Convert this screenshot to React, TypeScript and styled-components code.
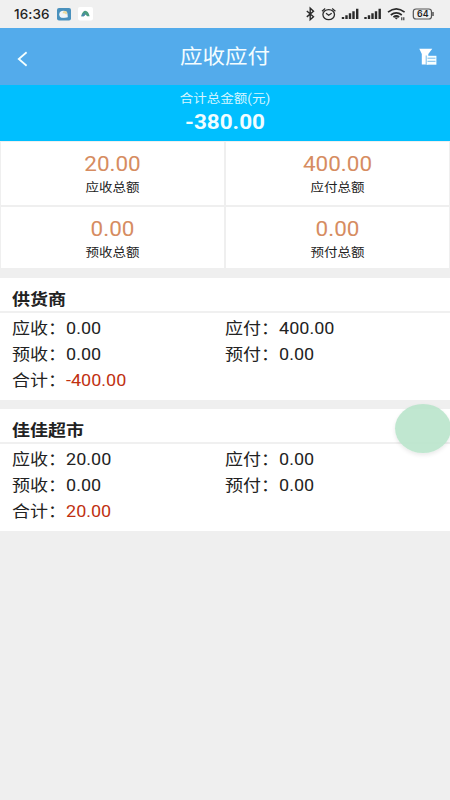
import React from 'react';
import styled, { createGlobalStyle } from 'styled-components';

const GlobalStyle = createGlobalStyle`
  * { box-sizing: border-box; }
  body {
    margin: 0;
    background: #efefef;
    font-family: Roboto, "Noto Sans CJK SC", sans-serif;
    color: #222;
  }
`;

const Screen = styled.div`
  position: relative;
  width: 450px;
  height: 800px;
  overflow: hidden;
  background: #efefef;
`;

const StatusBar = styled.div`
  display: flex;
  align-items: center;
  justify-content: space-between;
  height: 28px;
  padding: 0 15px 0 14px;
  background: #f0f0f0;
`;

const StatusGroup = styled.div`
  display: flex;
  align-items: center;
`;

const Clock = styled.span`
  width: 43px;
  font: 500 13.5px/28px Inter, sans-serif;
  letter-spacing: 0.1px;
  color: #222;
`;

const NavBar = styled.header`
  display: grid;
  grid-template-columns: 50px 1fr 50px;
  align-items: center;
  height: 57px;
  background: #53abeb;
`;

const NavButton = styled.button<{ $end?: boolean }>`
  display: flex;
  justify-content: ${(p) => (p.$end ? 'flex-end' : 'flex-start')};
  padding: ${(p) => (p.$end ? '0 13px 0 0' : '4px 0 0 17px')};
  border: 0;
  background: none;
`;

const Wide = styled.span<{ $size: number; $bold?: boolean; $color?: string; $start?: boolean }>`
  display: block;
  font-size: ${(p) => p.$size}px;
  font-weight: ${(p) => (p.$bold ? 700 : 400)};
  color: ${(p) => p.$color ?? 'inherit'};
  white-space: pre;
  transform: scaleX(1.125);
  transform-origin: ${(p) => (p.$start ? 'left' : 'center')};
`;

const Title = styled.h1`
  margin: 0;
  padding-top: 2px;
  line-height: 55px;
  text-align: center;
  font-weight: 400;
`;

const Banner = styled.section`
  height: 56px;
  padding-top: 4px;
  background: #00bfff;
  text-align: center;
  line-height: 21px;
`;

const BannerAmount = styled.div`
  line-height: 25px;
`;

const Summary = styled.section`
  display: grid;
  grid-template-columns: 223px 223px;
  grid-template-rows: 63px 61px;
  gap: 2px;
  padding: 1px 1px 0;
  height: 137px;
`;

const Cell = styled.div`
  padding-top: 10px;
  background: #fff;
  text-align: center;
  line-height: 25px;
`;

const CellLabel = styled.div`
  line-height: 23px;
`;

const Card = styled.section`
  height: 122px;
  margin-bottom: 9px;
  background: #fff;
`;

const CardName = styled.h2`
  height: 35px;
  margin: 0;
  padding: 4px 0 0 11.5px;
  border-bottom: 2px solid #f0f0f0;
  line-height: 35px;
`;

const Fields = styled.div`
  display: grid;
  grid-template-columns: 213.5px 213px;
  grid-auto-rows: 26px;
  padding: 3px 11.5px 0;
  line-height: 26px;
`;

const Red = styled.span`
  color: #c03010;
`;

const FloatingBall = styled.div`
  position: absolute;
  left: 395px;
  top: 404px;
  width: 56px;
  height: 49px;
  border-radius: 50%;
  background: rgba(183, 228, 201, 0.88);
  box-shadow: 0 2px 4px rgba(0, 0, 0, 0.09);
`;

const WeatherIcon = () => (
  <svg width="14" height="13" viewBox="0 0 14 13">
    <rect width="14" height="12.5" rx="2" fill="#4a91bd" />
    <ellipse cx="6.4" cy="6.3" rx="4.1" ry="3.5" fill="#f2f6f8" />
    <ellipse cx="7.9" cy="4.9" rx="2.3" ry="1.9" fill="#ead9a0" />
    <path d="M2.8 8.3a2 2 0 0 1 2.4-2.5 2.3 2.3 0 0 1 3.6.8 1.7 1.7 0 0 1 1.6 2.8H4.2a1.5 1.5 0 0 1-1.4-1.1Z" fill="#f2f6f8" />
  </svg>
);

const AppIcon = () => (
  <svg width="15" height="14" viewBox="0 0 15 14">
    <rect width="15" height="13.5" rx="2" fill="#fff" />
    <path d="M3.2 9.2C4 5.8 5.6 3.8 7.3 3.8c2 0 3.7 2.4 4.3 5.4H9.2L7.5 7.6 5.8 9.2Z" fill="#4c9d80" />
    <path d="M3.2 9.2l2.9-3.4 1.4 1.8-1.7 1.6Z" fill="#4c86b0" />
  </svg>
);

const IconGap = styled.span`
  width: 7px;
`;

const StatusIcons = () => (
  <svg width="131" height="28" viewBox="304 0 131 28" fill="none" stroke="#2b2b2b">
    <path d="M306.8 11l6.7 5.7-3.3 3V8.2l3.3 3-6.7 5.7" strokeWidth="1.4" />
    <ellipse cx="328.7" cy="14.6" rx="5.8" ry="5" strokeWidth="1.3" />
    <path d="M322 11.2l3.2-2.7M332.2 8.5l3.2 2.7M326 13.2l2.7 2 3-2" strokeWidth="1.2" />
    <g strokeWidth="2.4">
      <path d="M343 19v-2M346.5 19v-3.7M350 19v-5.8M353.5 19v-7.8M357.2 19V8.8" />
      <path d="M365.5 19v-2M369 19v-3.7M372.5 19v-5.8M376 19v-7.8M379.7 19V8.8" />
    </g>
    <path d="M388 12.2q8.3-6.6 16.6 0M390.8 15q5.5-4.3 11 0M393.4 17.2q3-2.4 5.8 0" strokeWidth="1.7" />
    <path d="M394.4 17.5h3.8l-1.9 2.1Z" fill="#2b2b2b" stroke="none" />
    <path d="M401.8 17.2v3M403.8 17.2v3" strokeWidth="1.1" />
    <rect x="413.3" y="9" width="18.2" height="10" rx="2.8" stroke="#555" strokeWidth="1.2" />
    <path d="M433 12v4" stroke="#555" strokeWidth="1.5" />
    <text x="422.8" y="17.2" textAnchor="middle" fontFamily="Inter" fontSize="8.8" fontWeight="600" fill="#222" stroke="none">64</text>
  </svg>
);

const BackIcon = () => (
  <svg width="12" height="18" viewBox="0 0 12 18" fill="none">
    <path d="M9.6 2.3L1.8 9l7.8 6.7" stroke="#f4ffff" strokeWidth="1.8" />
  </svg>
);

const FilterIcon = () => (
  <svg width="18" height="18" viewBox="0 0 18 18">
    <path d="M.3.7h13L9.3 6v10.5H2.8V6Z" fill="#fff" />
    <path d="M7.5 7.8h9.9v8.9H7.5Z" fill="#f8ffff" />
    <path d="M7.2 7.5v9.2M8.5 10.2h8M8.5 13.3h8" stroke="#76bceb" strokeWidth="1" />
  </svg>
);

const totals = [
  { value: '20.00', label: '应收总额' },
  { value: '400.00', label: '应付总额' },
  { value: '0.00', label: '预收总额' },
  { value: '0.00', label: '预付总额' },
];

const accounts = [
  { name: '供货商', fields: [['应收', '0.00'], ['应付', '400.00'], ['预收', '0.00'], ['预付', '0.00']], total: '-400.00' },
  { name: '佳佳超市', fields: [['应收', '20.00'], ['应付', '0.00'], ['预收', '0.00'], ['预付', '0.00']], total: '20.00' },
];

export default function App() {
  return (
    <Screen>
      <GlobalStyle />
      <StatusBar>
        <StatusGroup>
          <Clock>16:36</Clock>
          <WeatherIcon />
          <IconGap />
          <AppIcon />
        </StatusGroup>
        <StatusIcons />
      </StatusBar>
      <NavBar>
        <NavButton aria-label="返回"><BackIcon /></NavButton>
        <Title><Wide $size={20} $color="#f4fdff">应收应付</Wide></Title>
        <NavButton $end aria-label="筛选"><FilterIcon /></NavButton>
      </NavBar>
      <Banner>
        <Wide $size={12} $color="#d5f6ff">合计总金额(元)</Wide>
        <BannerAmount><Wide $size={20} $bold $color="#f0fdff">-380.00</Wide></BannerAmount>
      </Banner>
      <Summary>
        {totals.map((t) => (
          <Cell key={t.label}>
            <Wide $size={20} $color="#d68c61">{t.value}</Wide>
            <CellLabel><Wide $size={12}>{t.label}</Wide></CellLabel>
          </Cell>
        ))}
      </Summary>
      {accounts.map((a) => (
        <Card key={a.name}>
          <CardName><Wide $size={16} $bold $start>{a.name}</Wide></CardName>
          <Fields>
            {a.fields.map(([label, value]) => (
              <Wide key={label} $size={16} $start>{label}：{value}</Wide>
            ))}
            <Wide $size={16} $start>合计：<Red>{a.total}</Red></Wide>
          </Fields>
        </Card>
      ))}
      <FloatingBall />
    </Screen>
  );
}
